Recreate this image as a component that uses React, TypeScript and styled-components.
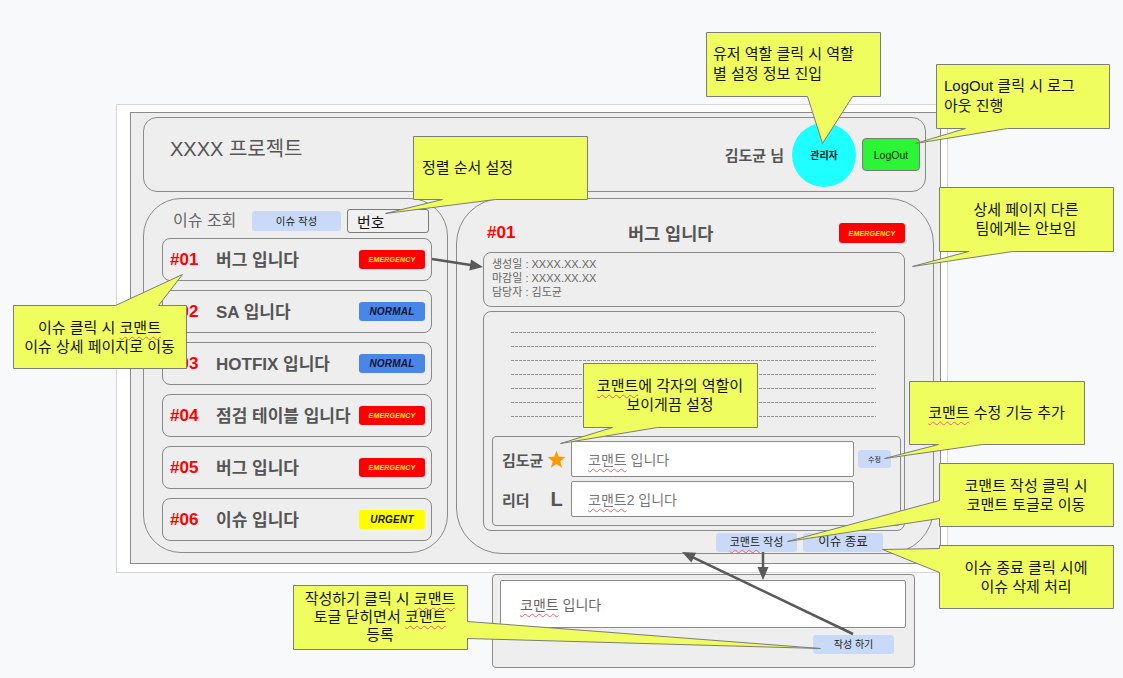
import React from 'react';
import styled, { createGlobalStyle, css } from 'styled-components';

const FONT = `"Liberation Sans", "Noto Sans CJK KR", sans-serif`;
const LINE = '#8a8a8a';
const PANEL = '#eeeeee';
const SOFT_BLUE = '#c9daf8';
const CALLOUT = '#effd5f';

const GlobalStyle = createGlobalStyle`
  html, body { margin: 0; padding: 0; background: #f8f9fa; }
  body { font-family: ${FONT}; }
  *, *::before, *::after { box-sizing: border-box; }
`;

const Canvas = styled.div`
  position: relative;
  width: 1123px;
  height: 678px;
  overflow: hidden;
  background: #f8f9fa;
  padding: 104px 0 0 116px;
  display: flex;
  flex-direction: column;
  align-items: flex-start;
  font-family: ${FONT};
`;

const Frame = styled.div`
  width: 832px;
  height: 469px;
  background: #ffffff;
  border: 1px solid #d6d6d6;
  padding: 7px 0 0 13px;
`;

const Board = styled.div`
  width: 811px;
  height: 452px;
  background: ${PANEL};
  border: 1px solid ${LINE};
  padding: 4px 0 0 12px;
  display: flex;
  flex-direction: column;
  gap: 6px;
`;

/* ---------- header ---------- */
const Header = styled.header`
  width: 783px;
  height: 75px;
  border: 1px solid ${LINE};
  border-radius: 14px;
  display: flex;
  align-items: center;
  padding: 0 5px 0 26px;
`;

const ProjectTitle = styled.h1`
  margin: 0;
  flex: 1;
  align-self: flex-start;
  margin-top: 21px;
  font-size: 20px;
  line-height: 20px;
  font-weight: 400;
  color: #555;
`;

const UserName = styled.span`
  font-size: 15px;
  font-weight: 700;
  color: #555;
  margin-right: 8px;
`;

const RoleCircle = styled.button`
  width: 64px;
  height: 64px;
  border-radius: 50%;
  border: none;
  background: #1effff;
  font-family: ${FONT};
  font-size: 10px;
  font-weight: 700;
  color: #111;
  padding: 0;
  margin-right: 6px;
`;

const LogOutButton = styled.button`
  width: 58px;
  height: 33px;
  border: 1px solid #7a7a7a;
  border-radius: 4px;
  background: #2bf535;
  font-family: ${FONT};
  font-size: 10.5px;
  color: #222;
  padding: 0;
`;

/* ---------- shared ---------- */
const Columns = styled.div`
  display: flex;
  gap: 8px;
  align-items: flex-start;
`;

const SoftButton = styled.button<{ $w: number; $h: number; $fs: number }>`
  width: ${(p) => p.$w}px;
  height: ${(p) => p.$h}px;
  border: none;
  border-radius: 3px;
  background: ${SOFT_BLUE};
  font-family: ${FONT};
  font-size: ${(p) => p.$fs}px;
  color: #222;
  padding: 0;
  line-height: 1;
  display: flex;
  align-items: center;
  justify-content: center;
  flex-shrink: 0;
  white-space: nowrap;
`;

const EditButton = styled(SoftButton)`
  margin-left: 4px;
`;

const Misspelled = styled.span`
  text-decoration: underline wavy #e36b6b;
  text-decoration-thickness: 1px;
  text-underline-offset: 3px;
  text-decoration-skip-ink: none;
`;

type Level = 'emergency' | 'normal' | 'urgent';

const levelStyles: Record<Level, ReturnType<typeof css>> = {
  emergency: css`
    background: #ff0000;
    color: #ffff00;
    font-size: 7px;
  `,
  normal: css`
    background: #4a86e8;
    color: #0b1437;
    font-size: 10px;
  `,
  urgent: css`
    background: #ffff00;
    color: #111;
    font-size: 10px;
  `,
};

const Badge = styled.span<{ $level: Level; $h: number }>`
  width: 66px;
  height: ${(p) => p.$h}px;
  border-radius: 3px;
  display: flex;
  align-items: center;
  justify-content: center;
  font-style: italic;
  font-weight: 700;
  letter-spacing: 0.2px;
  flex-shrink: 0;
  ${(p) => levelStyles[p.$level]}
`;

/* ---------- issue list ---------- */
const ListPanel = styled.section`
  width: 305px;
  height: 355px;
  border: 1px solid ${LINE};
  border-radius: 38px;
  padding: 10px 0 0 18px;
  display: flex;
  flex-direction: column;
`;

const ListToolbar = styled.div`
  display: flex;
  align-items: center;
  height: 24px;
  padding-left: 11px;
`;

const ListTitle = styled.span`
  font-size: 16px;
  line-height: 1;
  color: #666;
  width: 64px;
  margin-right: 15px;
  white-space: nowrap;
`;

const SortSelect = styled.div`
  width: 82px;
  height: 24px;
  margin-left: 6px;
  border: 1px solid #7a7a7a;
  border-radius: 3px;
  background: #f0f0f0;
  font-size: 15px;
  color: #111;
  display: flex;
  align-items: center;
  padding-left: 9px;
`;

const IssueList = styled.ul`
  list-style: none;
  margin: 5px 0 0;
  padding: 0;
  display: flex;
  flex-direction: column;
  gap: 9px;
`;

const IssueRow = styled.li`
  width: 270px;
  height: 43px;
  border: 1px solid ${LINE};
  border-radius: 8px;
  display: flex;
  align-items: center;
  padding: 0 6px 0 7px;
`;

const IssueNo = styled.span`
  width: 46px;
  font-size: 17px;
  font-weight: 700;
  color: #ff0000;
  flex-shrink: 0;
`;

const IssueTitle = styled.span`
  flex: 1;
  font-size: 17px;
  font-weight: 700;
  color: #555;
  white-space: nowrap;
  margin-top: -2px;
`;

/* ---------- detail ---------- */
const DetailPanel = styled.section`
  width: 478px;
  height: 356px;
  border: 1px solid ${LINE};
  border-radius: 46px;
  padding: 24px 28px 0 26px;
  display: flex;
  flex-direction: column;
`;

const DetailHead = styled.div`
  display: flex;
  align-items: center;
  height: 20px;
`;

const DetailNo = styled.span`
  width: 35px;
  padding-left: 4px;
  font-size: 17px;
  font-weight: 700;
  color: #ff0000;
`;

const DetailTitle = styled.h2`
  margin: -2px 0 0 110px;
  flex: 1;
  font-size: 17.5px;
  font-weight: 700;
  color: #555;
`;

const InfoBox = styled.div`
  margin-top: 9px;
  height: 55px;
  border: 1px solid ${LINE};
  border-radius: 8px;
  padding: 4px 8px;
  font-size: 11px;
  line-height: 14px;
  color: #666;
`;

const CommentsBox = styled.div`
  margin-top: 4px;
  height: 220px;
  border: 1px solid ${LINE};
  border-radius: 8px;
  padding: 20px 0 0 8px;
`;

const DashLines = styled.div`
  margin-left: 19px;
  width: 365px;
  display: flex;
  flex-direction: column;
  gap: 13px;
`;

const DashLine = styled.div`
  height: 1px;
  background: repeating-linear-gradient(90deg, #999 0 3px, transparent 3px 4px);
`;

const CommentGroup = styled.div`
  margin-top: 19px;
  width: 409px;
  height: 90px;
  border: 1px solid ${LINE};
  border-radius: 4px;
  padding: 4px 0 0 9px;
  display: flex;
  flex-direction: column;
  gap: 4px;
`;

const CommentRow = styled.div`
  display: flex;
  align-items: center;
  height: 36px;
`;

const AuthorName = styled.span`
  width: 45px;
  font-size: 15px;
  font-weight: 700;
  color: #555;
  white-space: nowrap;
`;

const RoleMark = styled.span`
  width: 19px;
  margin-right: 5px;
  display: flex;
  align-items: center;
  justify-content: center;
  font-size: 20px;
  font-weight: 700;
  color: #555;
`;

const CommentField = styled.div`
  width: 283px;
  height: 36px;
  background: #fff;
  border: 1px solid ${LINE};
  border-radius: 2px;
  padding-left: 16px;
  display: flex;
  align-items: center;
  font-size: 14px;
  color: #777;
`;

const DetailActions = styled.div`
  margin-top: 2px;
  display: flex;
  justify-content: flex-end;
  gap: 6px;
  padding-right: 22px;
`;

/* ---------- comment toggle ---------- */
const ToggleBox = styled.div`
  margin: 1px 0 0 376px;
  width: 423px;
  height: 94px;
  background: ${PANEL};
  border: 1px solid ${LINE};
  border-radius: 4px;
  padding: 5px 0 0 7px;
  display: flex;
  flex-direction: column;
`;

const ToggleField = styled.div`
  width: 406px;
  height: 48px;
  background: #fff;
  border: 1px solid ${LINE};
  border-radius: 2px;
  padding-left: 19px;
  display: flex;
  align-items: center;
  font-size: 14px;
  color: #666;
`;

const ToggleActions = styled.div`
  margin: 7px 0 0 313px;
`;

/* ---------- annotations ---------- */
const Overlay = styled.svg`
  position: absolute;
  left: 0;
  top: 0;
  pointer-events: none;
  overflow: visible;
`;

type Tail = { edge: 'top' | 'right' | 'bottom' | 'left'; a: number; b: number; tip: [number, number] };

const CalloutRoot = styled.div.attrs<{ $x: number; $y: number; $w: number; $h: number }>((p) => ({
  style: { left: p.$x, top: p.$y, width: p.$w, height: p.$h },
}))<{ $x: number; $y: number; $w: number; $h: number }>`
  position: absolute;
  display: flex;
  flex-direction: column;
  justify-content: center;
  font-size: 15px;
  color: #151515;
`;

const CalloutShape = styled.svg`
  position: absolute;
  left: 0;
  top: 0;
  overflow: visible;
`;

const CalloutText = styled.div<{ $align: 'left' | 'center'; $pad: number; $lh: number }>`
  position: relative;
  text-align: ${(p) => p.$align};
  padding: 0 ${(p) => p.$pad}px;
  line-height: ${(p) => p.$lh}px;
  white-space: nowrap;
`;

function Callout({
  box,
  tail,
  align = 'center',
  pad = 0,
  lh = 19,
  children,
}: {
  box: [number, number, number, number];
  tail: Tail;
  align?: 'left' | 'center';
  pad?: number;
  lh?: number;
  children: React.ReactNode;
}) {
  const [x0, y0, x1, y1] = box;
  const pts: [number, number][] = [[x0, y0]];
  if (tail.edge === 'top') pts.push([tail.a, y0], tail.tip, [tail.b, y0]);
  pts.push([x1, y0]);
  if (tail.edge === 'right') pts.push([x1, tail.a], tail.tip, [x1, tail.b]);
  pts.push([x1, y1]);
  if (tail.edge === 'bottom') pts.push([tail.b, y1], tail.tip, [tail.a, y1]);
  pts.push([x0, y1]);
  if (tail.edge === 'left') pts.push([x0, tail.b], tail.tip, [x0, tail.a]);
  const points = pts.map(([x, y]) => `${x - x0 + 0.5},${y - y0 + 0.5}`).join(' ');
  return (
    <CalloutRoot $x={x0} $y={y0} $w={x1 - x0} $h={y1 - y0}>
      <CalloutShape width={x1 - x0} height={y1 - y0}>
        <polygon points={points} fill={CALLOUT} stroke="#7c7c7c" strokeWidth={1} strokeLinejoin="miter" />
      </CalloutShape>
      <CalloutText $align={align} $pad={pad} $lh={lh}>
        {children}
      </CalloutText>
    </CalloutRoot>
  );
}

function Arrow({ from, to }: { from: [number, number]; to: [number, number] }) {
  const dx = to[0] - from[0];
  const dy = to[1] - from[1];
  const len = Math.hypot(dx, dy);
  const ux = dx / len;
  const uy = dy / len;
  const hl = 13;
  const hw = 5.5;
  const bx = to[0] - ux * hl;
  const by = to[1] - uy * hl;
  const px = -uy;
  const py = ux;
  return (
    <g>
      <line x1={from[0]} y1={from[1]} x2={bx + ux * 2} y2={by + uy * 2} stroke="#595959" strokeWidth={2.5} />
      <polygon
        points={`${to[0]},${to[1]} ${bx + px * hw},${by + py * hw} ${bx - px * hw},${by - py * hw}`}
        fill="#595959"
      />
    </g>
  );
}

const Star = () => (
  <svg width="19" height="18" viewBox="0 0 19 18">
    <polygon
      points="9.5,0.5 11.79,6.84 18.53,7.06 13.21,11.21 15.09,17.69 9.5,13.9 3.91,17.69 5.79,11.21 0.47,7.06 7.21,6.84"
      fill="#ff9900"
    />
  </svg>
);

const issues: { no: string; title: string; level: Level; label: string }[] = [
  { no: '#01', title: '버그 입니다', level: 'emergency', label: 'EMERGENCY' },
  { no: '#02', title: 'SA 입니다', level: 'normal', label: 'NORMAL' },
  { no: '#03', title: 'HOTFIX 입니다', level: 'normal', label: 'NORMAL' },
  { no: '#04', title: '점검 테이블 입니다', level: 'emergency', label: 'EMERGENCY' },
  { no: '#05', title: '버그 입니다', level: 'emergency', label: 'EMERGENCY' },
  { no: '#06', title: '이슈 입니다', level: 'urgent', label: 'URGENT' },
];

export default function App() {
  return (
    <>
      <GlobalStyle />
      <Canvas>
        <Frame>
          <Board>
            <Header>
              <ProjectTitle>XXXX 프로젝트</ProjectTitle>
              <UserName>김도균 님</UserName>
              <RoleCircle>관리자</RoleCircle>
              <LogOutButton>LogOut</LogOutButton>
            </Header>
            <Columns>
              <ListPanel>
                <ListToolbar>
                  <ListTitle>이슈 조회</ListTitle>
                  <SoftButton $w={89} $h={20} $fs={10.5}>
                    이슈 작성
                  </SoftButton>
                  <SortSelect>번호</SortSelect>
                </ListToolbar>
                <IssueList>
                  {issues.map((it) => (
                    <IssueRow key={it.no}>
                      <IssueNo>{it.no}</IssueNo>
                      <IssueTitle>{it.title}</IssueTitle>
                      <Badge $level={it.level} $h={19}>
                        {it.label}
                      </Badge>
                    </IssueRow>
                  ))}
                </IssueList>
              </ListPanel>

              <DetailPanel>
                <DetailHead>
                  <DetailNo>#01</DetailNo>
                  <DetailTitle>버그 입니다</DetailTitle>
                  <Badge $level="emergency" $h={20}>
                    EMERGENCY
                  </Badge>
                </DetailHead>
                <InfoBox>
                  <div>생성일 : XXXX.XX.XX</div>
                  <div>마감일 : XXXX.XX.XX</div>
                  <div>담당자 : 김도균</div>
                </InfoBox>
                <CommentsBox>
                  <DashLines>
                    {Array.from({ length: 7 }).map((_, i) => (
                      <DashLine key={i} />
                    ))}
                  </DashLines>
                  <CommentGroup>
                    <CommentRow>
                      <AuthorName>김도균</AuthorName>
                      <RoleMark>
                        <Star />
                      </RoleMark>
                      <CommentField>
                        <span>
                          <Misspelled>코맨트</Misspelled> 입니다
                        </span>
                      </CommentField>
                      <EditButton $w={33} $h={18} $fs={7}>
                        수정
                      </EditButton>
                    </CommentRow>
                    <CommentRow>
                      <AuthorName>리더</AuthorName>
                      <RoleMark>L</RoleMark>
                      <CommentField>
                        <span>
                          <Misspelled>코맨트</Misspelled>2 입니다
                        </span>
                      </CommentField>
                    </CommentRow>
                  </CommentGroup>
                </CommentsBox>
                <DetailActions>
                  <SoftButton $w={81} $h={19} $fs={11}>
                    <span>
                      <Misspelled>코맨트</Misspelled> 작성
                    </span>
                  </SoftButton>
                  <SoftButton $w={80} $h={19} $fs={12.5}>
                    이슈 종료
                  </SoftButton>
                </DetailActions>
              </DetailPanel>
            </Columns>
          </Board>
        </Frame>

        <ToggleBox>
          <ToggleField>
            <span>
              <Misspelled>코맨트</Misspelled> 입니다
            </span>
          </ToggleField>
          <ToggleActions>
            <SoftButton $w={81} $h={19} $fs={10}>
              작성 하기
            </SoftButton>
          </ToggleActions>
        </ToggleBox>

        <Overlay width={1123} height={678}>
          <Arrow from={[432, 259]} to={[483, 267]} />
          <Arrow from={[853, 634]} to={[682, 552]} />
          <Arrow from={[763, 552]} to={[763, 580]} />
        </Overlay>

        <Callout box={[706, 32, 880, 96]} tail={{ edge: 'bottom', a: 807, b: 852, tip: [822, 143] }} align="left" pad={7} lh={20}>
          <div>유저 역할 클릭 시 역할</div>
          <div>별 설정 정보 진입</div>
        </Callout>
        <Callout box={[936, 64, 1109, 128]} tail={{ edge: 'bottom', a: 965, b: 1007, tip: [915, 143] }} align="left" pad={8} lh={20}>
          <div>LogOut 클릭 시 로그</div>
          <div>아웃 진행</div>
        </Callout>
        <Callout box={[413, 136, 587, 199]} tail={{ edge: 'bottom', a: 442, b: 495, tip: [385, 213] }} align="left" pad={9}>
          <div>정렬 순서 설정</div>
        </Callout>
        <Callout box={[13, 305, 186, 368]} tail={{ edge: 'top', a: 115, b: 158, tip: [182, 274] }}>
          <div>
            이슈 클릭 시 <Misspelled>코맨트</Misspelled>
          </div>
          <div>이슈 상세 페이지로 이동</div>
        </Callout>
        <Callout box={[939, 187, 1113, 251]} tail={{ edge: 'bottom', a: 968, b: 1012, tip: [912, 266] }}>
          <div>상세 페이지 다른</div>
          <div>팀에게는 안보임</div>
        </Callout>
        <Callout box={[583, 363, 757, 427]} tail={{ edge: 'bottom', a: 612, b: 657, tip: [560, 443] }}>
          <div>
            <Misspelled>코맨트</Misspelled>에 각자의 역할이
          </div>
          <div>보이게끔 설정</div>
        </Callout>
        <Callout box={[909, 381, 1084, 444]} tail={{ edge: 'bottom', a: 938, b: 982, tip: [884, 458] }}>
          <div>
            <Misspelled>코맨트</Misspelled> 수정 기능 추가
          </div>
        </Callout>
        <Callout box={[939, 463, 1113, 526]} tail={{ edge: 'left', a: 500, b: 518, tip: [787, 541] }}>
          <div>코맨트 작성 클릭 시</div>
          <div>코맨트 토글로 이동</div>
        </Callout>
        <Callout box={[939, 545, 1113, 608]} tail={{ edge: 'left', a: 548, b: 572, tip: [882, 549] }}>
          <div>이슈 종료 클릭 시에</div>
          <div>이슈 삭제 처리</div>
        </Callout>
        <Callout box={[293, 585, 467, 649]} tail={{ edge: 'right', a: 621, b: 638, tip: [820, 648] }} lh={18}>
          <div>
            작성하기 클릭 시 <Misspelled>코맨트</Misspelled>
          </div>
          <div>
            토글 닫히면서 <Misspelled>코맨트</Misspelled>
          </div>
          <div>등록</div>
        </Callout>
      </Canvas>
    </>
  );
}
